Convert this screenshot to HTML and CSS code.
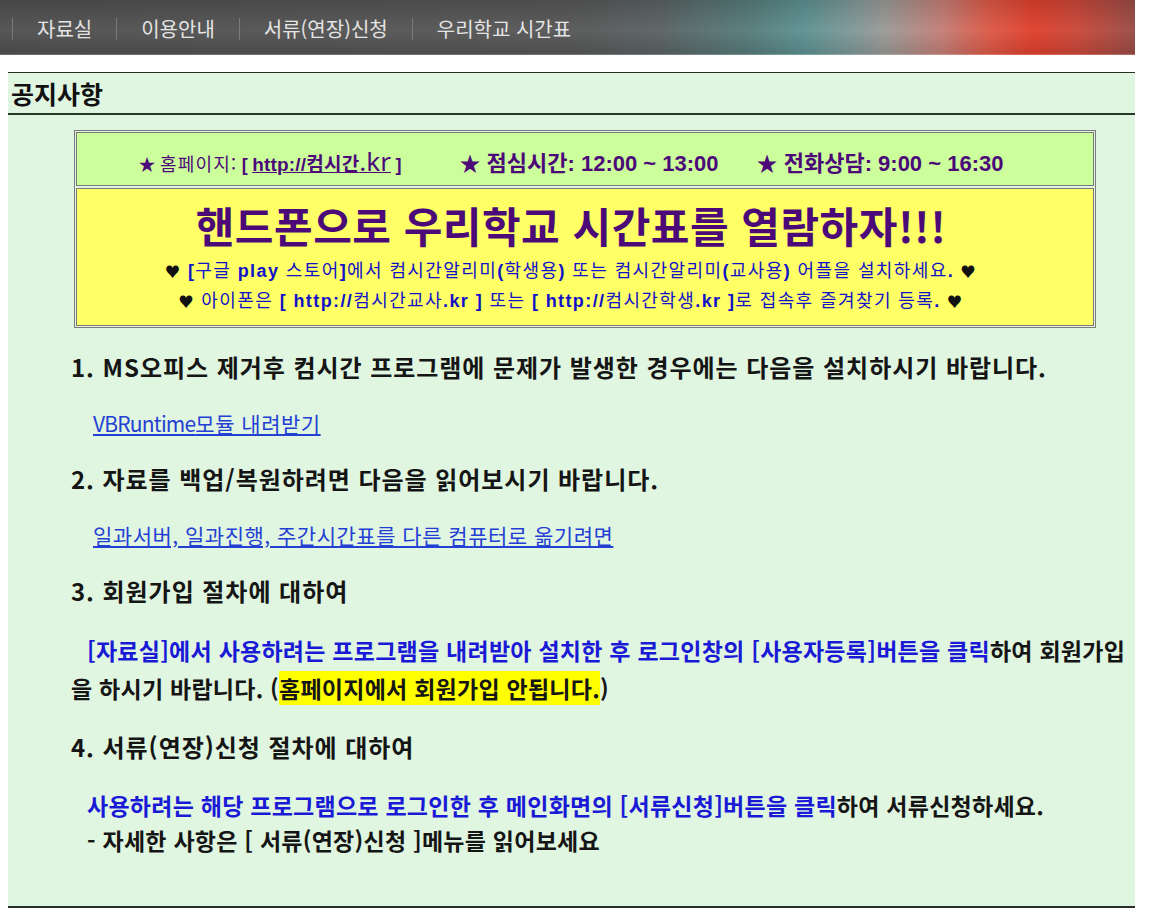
FILE: index.html
```html
<!DOCTYPE html>
<html lang="ko">
<head>
<meta charset="utf-8">
<title>공지사항</title>
<link rel="stylesheet" href="styles.css">
</head>
<body>
<div class="nav">
  <a class="nav-item">자료실</a>
  <a class="nav-item">이용안내</a>
  <a class="nav-item">서류(연장)신청</a>
  <a class="nav-item">우리학교 시간표</a>
</div>
<div class="notice">
  <div class="notice-title">공지사항</div>
  <div class="notice-body">
    <div class="box">
      <div class="cell cell-info">
        <span class="info-group"><span class="star star-small">★</span> <span class="info-label">홈페이지:</span> <b class="bracket">[</b> <a class="home-link"><b class="home-small">http://컴시간</b><span class="home-kr">.kr</span></a> <b class="bracket">]</b></span>
        <span class="info-group info-lunch"><span class="star">★</span> <b>점심시간: 12:00 ~ 13:00</b></span>
        <span class="info-group info-phone"><span class="star">★</span> <b>전화상담: 9:00 ~ 16:30</b></span>
      </div>
      <div class="cell cell-promo">
        <div class="promo-title">핸드폰으로 우리학교 시간표를 열람하자!!!</div>
        <div class="promo-line"><span class="heart">♥</span> <b>[</b>구글 <b>play</b> 스토어<b>]</b>에서 컴시간알리미<b>(</b>학생용<b>)</b> 또는 컴시간알리미<b>(</b>교사용<b>)</b> 어플을 설치하세요<b>.</b> <span class="heart">♥</span></div>
        <div class="promo-line"><span class="heart">♥</span> 아이폰은 <b>[ http://</b>컴시간교사<b>.kr ]</b> 또는 <b>[ http://</b>컴시간학생<b>.kr ]</b>로 접속후 즐겨찾기 등록<b>.</b> <span class="heart">♥</span></div>
      </div>
    </div>

    <div class="items">
      <div class="item-head">1. MS오피스 제거후 컴시간 프로그램에 문제가 발생한 경우에는 다음을 설치하시기 바랍니다.</div>
      <div class="item-link"><a><span class="latin">VBRuntime</span>모듈 내려받기</a></div>
      <div class="item-head">2. 자료를 백업/복원하려면 다음을 읽어보시기 바랍니다.</div>
      <div class="item-link"><a>일과서버, 일과진행, 주간시간표를 다른 컴퓨터로 옮기려면</a></div>
      <div class="item-head">3. 회원가입 절차에 대하여</div>
      <div class="item-text item-text-join"><span class="blue">[자료실]에서 사용하려는 프로그램을 내려받아 설치한 후 로그인창의 [사용자등록]버튼을 클릭</span>하여 회원가입<br>을 하시기 바랍니다. (<span class="mark">홈페이지에서 회원가입 안됩니다.</span>)</div>
      <div class="item-head">4. 서류(연장)신청 절차에 대하여</div>
      <div class="item-text item-text-doc"><span class="blue">사용하려는 해당 프로그램으로 로그인한 후 메인화면의 [서류신청]버튼을 클릭</span>하여 서류신청하세요.<br>- 자세한 사항은 [ 서류(연장)신청 ]메뉴를 읽어보세요</div>
    </div>
  </div>
</div>
</body>
</html>
```
FILE: styles.css
```css
html, body {
  margin: 0;
  padding: 0;
  background: #ffffff;
}
body {
  font-family: "Noto Sans CJK KR", "Noto Sans", sans-serif;
  width: 1135px;
}
.nav {
  height: 55px;
  box-sizing: border-box;
  padding: 3px 0 0 12px;
  display: flex;
  align-items: center;
  background:
    linear-gradient(180deg, rgba(0,0,0,0.12) 0%, rgba(255,255,255,0.04) 55%, rgba(0,0,0,0.10) 97%, rgba(255,255,255,0.25) 100%),
    linear-gradient(90deg, #505050 0%, #575757 50%, #5a6262 58%, #577c7c 66%, #5e9292 71%, #7f9898 75%, #9b9a96 78%, #c47e76 83%, #dc5a48 87%, #e0402c 91%, #c9483a 95%, #9a4c46 100%);
}
.nav-item {
  color: #e4e4e4;
  font-size: 20px;
  line-height: 22px;
  padding: 0 24px 0 24px;
  border-left: 1px solid #7a7a7a;
  text-decoration: none;
}
.notice {
  margin: 17px 0 0 8px;
  background: #e0f6e0;
  border-top: 1px solid #2a2f2a;
  border-bottom: 2px solid #2a2f2a;
}
.notice-title {
  height: 40px;
  line-height: 40px;
  padding-left: 3px;
  font-size: 25px;
  font-weight: bold;
  color: #111;
  border-bottom: 2px solid #2a3a2a;
}
.notice-body {
  padding: 15px 0 48px 0;
}
.box {
  margin-left: 66px;
  width: 1018px;
  border: 1px solid #7a7a7a;
  padding: 1px;
  display: flex;
  flex-direction: column;
  gap: 2px;
  font-family: "Liberation Sans", "Noto Sans CJK KR", sans-serif;
}
.cell {
  border: 1px solid #7a7a7a;
  padding-right: 28px;
}
.cell-info {
  background: #ccff9c;
  height: 54px;
  display: flex;
  align-items: center;
  justify-content: center;
  padding-top: 4px;
  box-sizing: border-box;
  color: #4b0a78;
}
.info-group {
  white-space: nowrap;
}
.info-lunch { margin-left: 58px; font-size: 22px; }
.info-phone { margin-left: 38px; font-size: 22px; }
.star {
  font-size: 21px;
  color: #4b0a78;
}
.star-small { font-size: 17px; }
.info-label {
  font-family: "Noto Sans CJK KR", sans-serif;
  font-size: 18px;
  letter-spacing: 1.2px;
}
.bracket { font-size: 18px; }
.home-link {
  color: #4b0a78;
  text-decoration: underline;
}
.home-small { font-size: 19px; letter-spacing: 0.2px; }
.home-kr { font-size: 26px; font-family: "Noto Sans", sans-serif; }
.cell-promo {
  background: #ffff66;
  padding-top: 10px;
  padding-bottom: 10px;
  text-align: center;
}
.promo-title {
  font-size: 42px;
  line-height: 52px;
  font-weight: bold;
  letter-spacing: 0.5px;
  color: #4b0a78;
  font-family: "Noto Sans CJK KR", sans-serif;
  margin-bottom: 4px;
}
.promo-line {
  font-size: 18px;
  line-height: 28px;
  letter-spacing: 1.4px;
  color: #1212c8;
  font-family: "Noto Sans CJK KR", sans-serif;
}
.promo-line b {
  font-family: "Liberation Sans", sans-serif;
}
.heart { color: #111; font-size: 15px; }
.items {
  margin: 23px 0 0 63px;
  display: flex;
  flex-direction: column;
  gap: 24px;
}
.item-head {
  font-size: 24px;
  line-height: 32px;
  font-weight: bold;
  color: #151515;
  letter-spacing: 0.95px;
}
.item-link {
  padding-left: 22px;
  font-size: 21px;
  line-height: 32px;
  letter-spacing: 0.5px;
}
.item-link a {
  color: #2440d4;
  text-decoration: underline;
}
.latin { letter-spacing: -0.8px; }
.item-text {
  font-size: 23px;
  font-weight: bold;
  color: #151515;
  white-space: nowrap;
}
.item-text-join {
  line-height: 38px;
  text-indent: 16px;
  letter-spacing: 0.25px;
}
.item-text-doc {
  line-height: 35px;
  padding-left: 16px;
  letter-spacing: 0.25px;
  margin-top: 1px;
}
.blue { color: #1a1ad6; }
.mark { background: #ffff00; }
```
